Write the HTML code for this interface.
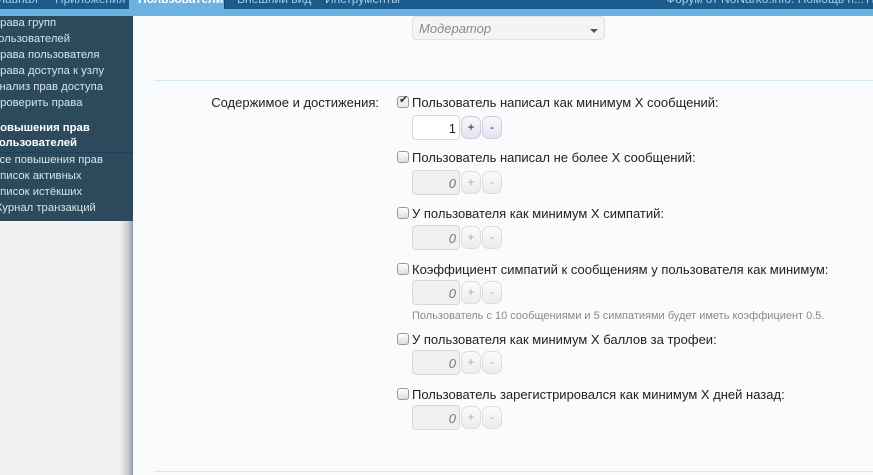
<!DOCTYPE html>
<html><head><meta charset="utf-8"><style>
*{margin:0;padding:0;box-sizing:border-box}
body{width:873px;height:475px;overflow:hidden;background:#fafbfd;font-family:"Liberation Sans","DejaVu Sans",sans-serif;position:relative}
.top{position:absolute;left:0;top:0;width:873px;height:9px;background:#185b8c;overflow:hidden}
.strip{position:absolute;left:0;top:9px;width:873px;height:7px;background:#6bb1e1}
.tab{position:absolute;top:-8px;font-size:12px;color:#a9cbe6;white-space:nowrap}
.act{position:absolute;left:129px;top:0;width:96px;height:16px;background:#6bb1e1;border-right:1px solid #0f4a74}
.side{position:absolute;left:0;top:16px;width:133px;height:205px;background:#2c4a5c}
.side div{position:absolute;left:-8px;font-size:11.3px;color:#d5e4ee;white-space:nowrap}
.side .b{font-weight:bold;color:#fff}
.below{position:absolute;left:0;top:221px;width:133px;height:254px;background:linear-gradient(to right,#f0f0f0 0,#f0f0f0 120px,#c8ccd0 128px,#8f9aa5 133px)}
.sep{position:absolute;left:154px;width:719px;height:1px;background:#d6e9f5}
.sel{position:absolute;left:412px;top:16px;width:193px;height:24px;border:1px solid #e2e2e2;border-radius:4px;background:#f4f4f4;font-size:13px;font-style:italic;color:#8a8a8a;padding:4px 0 0 6px}
.sel:after{content:"";position:absolute;right:6px;top:12px;border:4px solid transparent;border-top-color:#555}
.lbl{position:absolute;right:494px;top:95px;font-size:13px;color:#222}
.cb{position:absolute;left:397px;width:12px;height:12px;border:1px solid #9a9a9a;border-radius:3px;background:linear-gradient(#fff,#ddd)}
.t{position:absolute;left:412px;font-size:13px;color:#222;white-space:nowrap}
.in{position:absolute;left:412px;width:48px;height:25px;border:1px solid #d8d8d8;border-radius:4px;background:#f0f0f0;font-size:13px;font-style:italic;color:#777;text-align:right;padding:5px 3px 0 0}
.in.on{background:#fff;font-style:normal;color:#222}
.bt{position:absolute;width:20px;height:23px;border:1px solid #ddd;border-radius:7px;background:linear-gradient(#fbfbfb,#ececec);font-size:12px;color:#aaa;text-align:center;line-height:21px}
.bt.on{color:#223;border-color:#ccd;background:linear-gradient(#f8f8ff,#e4e4f0)}
.hint{position:absolute;left:412px;top:310px;font-size:11px;color:#8a8a8a;white-space:nowrap}
</style></head><body>
<div class="top">
<div class="act" style="background:#6bb1e1"></div>
<span class="tab" style="left:-2px">лавная</span>
<span class="tab" style="left:55px">Приложения</span>
<span class="tab" style="left:138px;color:#fff;font-weight:bold">Пользователи</span>
<span class="tab" style="left:237px">Внешний вид</span>
<span class="tab" style="left:325px">Инструменты</span>
<span class="tab" style="left:666px">Форум от NoNarko.info. Помощь н...</span>
<span class="tab" style="left:866px">П</span>
</div>
<div class="strip"></div>
<div class="side">
<div style="top:1px">Права групп</div>
<div style="top:17px">пользователей</div>
<div style="top:33px">Права пользователя</div>
<div style="top:49px">Права доступа к узлу</div>
<div style="top:65px">Анализ прав доступа</div>
<div style="top:81px">Проверить права</div>
<div class="b" style="top:106px">Повышения прав</div>
<div class="b" style="top:121px">пользователей</div>
<div style="top:136px;left:0;width:133px;height:1px;background:#1e3f5c"></div>
<div style="top:138px">Все повышения прав</div>
<div style="top:154px">Список активных</div>
<div style="top:170px">Список истёкших</div>
<div style="top:186px">Журнал транзакций</div>
</div>
<div class="below"></div>
<div class="sel">Модератор</div>
<div class="sep" style="top:80px"></div>
<div class="sep" style="top:471px"></div>
<div class="lbl">Содержимое и достижения:</div>

<div class="cb" style="top:96px;background:#eee"><span style="position:absolute;left:1px;top:-4px;font-size:11px;color:#333">✔</span></div>
<div class="t" style="top:95px">Пользователь написал как минимум X сообщений:</div>
<div class="in on" style="top:115px">1</div><div class="bt on" style="left:461px;top:116px">+</div><div class="bt on" style="left:482px;top:116px">-</div>

<div class="cb" style="top:151px"></div>
<div class="t" style="top:150px">Пользователь написал не более X сообщений:</div>
<div class="in" style="top:170px">0</div><div class="bt" style="left:461px;top:171px">+</div><div class="bt" style="left:482px;top:171px">-</div>

<div class="cb" style="top:207px"></div>
<div class="t" style="top:206px">У пользователя как минимум X симпатий:</div>
<div class="in" style="top:225px">0</div><div class="bt" style="left:461px;top:226px">+</div><div class="bt" style="left:482px;top:226px">-</div>

<div class="cb" style="top:263px"></div>
<div class="t" style="top:262px">Коэффициент симпатий к сообщениям у пользователя как минимум:</div>
<div class="in" style="top:280px">0</div><div class="bt" style="left:461px;top:281px">+</div><div class="bt" style="left:482px;top:281px">-</div>
<div class="hint">Пользователь с 10 сообщениями и 5 симпатиями будет иметь коэффициент 0.5.</div>

<div class="cb" style="top:333px"></div>
<div class="t" style="top:332px">У пользователя как минимум X баллов за трофеи:</div>
<div class="in" style="top:350px">0</div><div class="bt" style="left:461px;top:351px">+</div><div class="bt" style="left:482px;top:351px">-</div>

<div class="cb" style="top:388px"></div>
<div class="t" style="top:387px">Пользователь зарегистрировался как минимум X дней назад:</div>
<div class="in" style="top:405px">0</div><div class="bt" style="left:461px;top:406px">+</div><div class="bt" style="left:482px;top:406px">-</div>
</body></html>
